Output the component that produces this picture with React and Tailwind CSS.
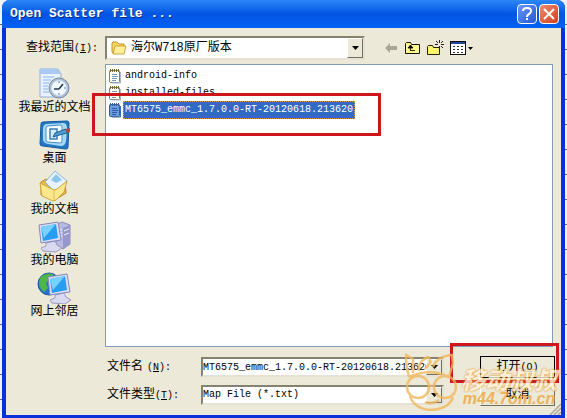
import React, { useState } from "react";

const files = [
  "android-info",
  "installed-files",
  "MT6575_emmc_1.7.0.0-RT-20120618.213620",
];

const RecentIcon = () => (
  <svg width="32" height="32" viewBox="0 0 32 32">
    <path d="M2 1h18l3 5v23H2z" fill="#e8f1fd" stroke="#8fb0dc" />
    <path d="M2 1h18l3 5H2z" fill="#a9c9f3" />
    <path d="M5 9h11M5 12h8M5 15h6M5 18h5M5 21h5M5 24h6" stroke="#8fb4e6" />
    <circle cx="21" cy="20" r="10" fill="#aebdcf" stroke="#788ca5" />
    <circle cx="21" cy="20" r="7.5" fill="#f2f8ff" stroke="#d5e2ee" />
    <path d="M21 21l4-5M21 21h-5" stroke="#23384e" strokeWidth="1.6" fill="none" />
    <circle cx="21" cy="14" r=".8" fill="#3b75b5" />
    <circle cx="27" cy="20" r=".8" fill="#3b75b5" />
    <circle cx="21" cy="26" r=".8" fill="#3b75b5" />
  </svg>
);

const DesktopIcon = () => (
  <svg width="32" height="32" viewBox="0 0 32 32">
    <path d="M4 3l24-1q2 0 2 2l-1 24q0 2-2 2L4 27q-3 0-3-2L2 5q0-2 2-2z" fill="#2479c4" stroke="#12579b" />
    <path d="M7 5l18-1q3 1 3 5l-1 13q-1 5-5 5l-13-2q-5-1-5-5V10q0-4 3-5z" fill="#a9d8f6" />
    <path d="M9 7l12-1q2 0 2 2v14q0 2-2 2L9 23q-2 0-2-2V9q0-2 2-2z" fill="#f7fcff" stroke="#438ec9" />
    <path d="M11 10h7v10h-7z" fill="#d6ecfc" stroke="#3e7eb8" strokeWidth="1.500" />
    <path d="M14 18l2-4 11-4 1 4-11 3z" fill="#4c9bd5" stroke="#1f6096" />
    <path d="M27 10l4-1v4l-3 1z" fill="#cf3e3e" />
  </svg>
);

const DocumentsIcon = () => (
  <svg width="32" height="32" viewBox="0 0 32 32">
    <path d="M3 12l5-3 5 3 14-1 1 12-11 7L3 25z" fill="#e8bd45" stroke="#ba8b28" />
    <path d="M7 12L17 1l12 10-9 14z" fill="#e7f3fd" stroke="#8bb2d6" />
    <path d="M13 10l5-6 6 6-6 3z" fill="#8fc4ec" />
    <path d="M2 13l14 7 3-1 10-8-3 11-8 8-3 1L4 26z" fill="#fbe88d" stroke="#d2a63c" />
    <path d="M16 20v10" stroke="#e2bd54" />
  </svg>
);

const Monitor = () => (
  <g>
    <path d="M9 22l9-2 2 4 5 3-6 4-13-1-2-3 5-2z" fill="#d9daf0" stroke="#9a9bc5" />
    <path d="M2 4l19-3 3 18-20 3z" fill="#dcddf5" stroke="#8589bd" />
    <path d="M4 6l15-3 2 14-15 3z" fill="#279df0" />
    <path d="M4 6l15-3-12 14z" fill="#79d1ff" />
  </g>
);

const ComputerIcon = () => (
  <svg width="34" height="32" viewBox="0 0 34 32">
    <path d="M19 4l6-3 8 3v19l-7 5-7-3z" fill="#b9b9df" stroke="#8a8cbb" />
    <path d="M26 7l7-3v19l-7 5z" fill="#9698cb" />
    <path d="M20 8l5 1M20 11l5 1M20 14l5 1M27 10l5-2M27 14l5-2" stroke="#f0f0ff" />
    <Monitor />
  </svg>
);

const NetworkIcon = () => (
  <svg width="34" height="32" viewBox="0 0 34 32">
    <circle cx="12" cy="12" r="11" fill="#2673c9" stroke="#1c58a0" />
    <path d="M3 6q5-6 13-4l-3 6-4 3 2 5-4 4Q0 15 3 6z" fill="#4fb64b" />
    <path d="M15 3l5 4-3 3-3-3z" fill="#8bd96c" />
    <g transform="translate(9 1)">
      <Monitor />
    </g>
  </svg>
);

const places = [
  { name: "我最近的文档", Icon: RecentIcon },
  { name: "桌面", Icon: DesktopIcon },
  { name: "我的文档", Icon: DocumentsIcon },
  { name: "我的电脑", Icon: ComputerIcon },
  { name: "网上邻居", Icon: NetworkIcon },
];

const NoteIcon = ({ selected }) => (
  <svg width="14" height="16" viewBox="0 0 14 16" className="shrink-0">
    <rect x="1.5" y="2.5" width="10" height="12" rx="1" fill={selected ? "#6d9be0" : "#fffef4"} stroke={selected ? "#315c9f" : "#777c86"} />
    <path d="M12.5 4v11H4" fill="none" stroke={selected ? "#416eaf" : "#a9b5c4"} />
    <path d="M2.5 1v3M4.5 1v3M6.5 1v3M8.5 1v3M10.5 1v3" stroke={selected ? "#37619e" : "#76613b"} />
    <path d="M4 6.5h5M4 8.5h6M4 10.5h5M4 12.5h4" stroke={selected ? "#2e5ca7" : "#7898b9"} />
  </svg>
);

const FolderIcon = () => (
  <svg width="16" height="14" viewBox="0 0 16 14" className="shrink-0">
    <path d="M1 2l1-1h4l2 2h5v9H2l-1-1z" fill="#f6d766" stroke="#c29327" />
    <path d="M4 5h11l-2 8H2z" fill="#fff09c" stroke="#cfa23a" />
  </svg>
);

const Arrow = () => (
  <span className="pointer-events-none absolute inset-y-0 right-0 flex w-4 items-center justify-center border border-t-white border-r-[#716f64] border-b-[#716f64] border-l-white bg-[#ece9d8]">
    <svg width="7" height="4" viewBox="0 0 7 4">
      <path d="M0 0h7L3.500 4z" fill="#000" />
    </svg>
  </span>
);

const field =
  "border-2 border-t-[#85836f] border-l-[#85836f] border-r-[#e5e2d3] border-b-[#e5e2d3] bg-white";

const Watermark = () => (
  <div className="pointer-events-none absolute right-1 bottom-1 flex items-end gap-0.5 opacity-80">
    <svg width="54" height="58" viewBox="0 0 54 58" fill="none" stroke="#f0b860" strokeWidth="2.500">
      <path d="M4 24Q1 14 1 2l7 4v14M14 18q-1-10 9-14 3 2 2 6l-5 6M28 14Q32 3 47 2l1 8-4 14M4 24q22-10 42 1" />
      <circle cx="13" cy="34" r="11" />
      <circle cx="40" cy="34" r="11" />
      <path d="M24 33h5M5 43q4 13 21 14 18-1 22-13M20 49q7 3 14-2" />
    </svg>
    <div className="flex flex-col items-center pb-1 font-['Noto_Sans_CJK_SC',sans-serif] font-bold italic">
      <span className="text-2xl leading-6 text-[#fff4dc] [text-shadow:0_0_2px_#e79225,0_0_2px_#e79225]">移动叔叔</span>
      <span className="font-['Liberation_Sans',sans-serif] text-base leading-4 text-[#eda63c]">m44.7om.cn</span>
    </div>
  </div>
);

export default function App() {
  const [selected, setSelected] = useState(files[2]);
  const [fileName, setFileName] = useState(files[2]);

  const pick = (name) => {
    setSelected(name);
    setFileName(name);
  };

  return (
    <div className="flex min-h-screen bg-[repeating-linear-gradient(#eef3fb_0_24px,#5f6675_24px_25px)] px-0.5 font-['Liberation_Mono','Noto_Sans_CJK_SC',monospace] text-xs text-black">
      <div className="relative flex flex-1 flex-col rounded-t-lg border-x-4 border-b-[3px] border-[#0831d9] bg-[#ece9d8]">
        <header className="-mx-1 flex h-7 items-center gap-0.5 rounded-t-lg bg-linear-to-b from-[#2c86f5] via-[#0454e3] to-[#0361f5] pr-1.5 pl-2">
          <h1 className="flex-1 text-[13px] font-bold text-white [text-shadow:1px_1px_#0a2a80]">Open Scatter file ...</h1>
          <button aria-label="Help" className="flex h-5 w-5 items-center justify-center rounded-sm border border-white bg-linear-to-br from-[#6c95f5] to-[#2157d7]">
            <svg width="12" height="14" viewBox="0 0 12 14" fill="none" stroke="#fff" strokeWidth="2">
              <path d="M2 4q0-3 4-3t4 3q0 2-2 3T6 10M6 11v2" />
            </svg>
          </button>
          <button aria-label="Close" className="flex h-5 w-5 items-center justify-center rounded-sm border border-white bg-linear-to-br from-[#ed8a6c] to-[#cf3c18]">
            <svg width="12" height="12" viewBox="0 0 12 12" stroke="#fff" strokeWidth="2">
              <path d="M1 1l10 10M11 1L1 11" />
            </svg>
          </button>
        </header>

        <div className="flex items-center pt-2">
          <label htmlFor="folder" className="w-[99px] pl-5 leading-5">
            查找范围<span className="text-[10px]">(<u>I</u>):</span>
          </label>
          <div className={`relative flex h-6 w-[260px] items-center ${field}`}>
            <span className="pointer-events-none absolute left-1">
              <FolderIcon />
            </span>
            <select id="folder" className="h-full w-full appearance-none pl-6 outline-none">
              <option>海尔W718原厂版本</option>
            </select>
            <Arrow />
          </div>
          <div className="ml-5 flex items-center gap-1.5">
            <button aria-label="Back">
              <svg width="14" height="12" viewBox="0 0 14 12">
                <path d="M0 6l5-5v3h7v4H5v3z" fill="#aaa797" />
              </svg>
            </button>
            <button aria-label="Up one level">
              <svg width="16" height="14" viewBox="0 0 16 14">
                <path d="M.5 12.500V2.500l1-1h4l1 2h8v9z" fill="#fff98b" stroke="#151500" />
                <path d="M5.500 10V6.500M5 9.500h5M3 7l2.500-3L8 7z" fill="#000" stroke="#000" strokeWidth=".8" />
              </svg>
            </button>
            <button aria-label="New folder">
              <svg width="17" height="16" viewBox="0 0 17 16">
                <path d="M.5 14.500v-8l1-1h4l1 2h6v7z" fill="#fff46e" stroke="#252100" />
                <path d="M12.500 0v3M12.500 6v3M8 4.500h3M14 4.500h3M9 1l2 2M14 6l2 2M16 1l-2 2" stroke="#222" />
              </svg>
            </button>
            <button aria-label="Views" className="flex items-center gap-0.5">
              <svg width="16" height="14" viewBox="0 0 16 14">
                <rect x=".5" y=".5" width="15" height="13" fill="#fff" stroke="#111" />
                <path d="M1 2h14" stroke="#23479c" strokeWidth="2" />
                <path d="M3 5.500h10M3 8.500h10M3 11.500h10" stroke="#333" strokeDasharray="2 2" />
              </svg>
              <svg width="5" height="3" viewBox="0 0 5 3">
                <path d="M0 0h5L2.500 3z" />
              </svg>
            </button>
          </div>
        </div>

        <main className="mt-1 flex flex-1">
          <nav className="flex w-[99px] flex-col items-center pt-px pr-0.5">
            {places.map(({ name, Icon }) => (
              <button key={name} className="flex h-[51px] flex-col items-center justify-end whitespace-nowrap leading-4">
                <Icon />
                {name}
              </button>
            ))}
          </nav>

          <div className="flex flex-1 flex-col">
            <ul className="relative mr-2 flex-1 border border-[#7f9db9] bg-white pt-0.5 pl-0.5">
              {files.map((name) => (
                <li key={name}>
                  <button onClick={() => pick(name)} className="flex h-[17px] items-center gap-px text-[10px]">
                    <NoteIcon selected={selected === name} />
                    <span
                      className={
                        selected === name
                          ? "border border-dotted border-[#d99a3d] bg-[#316ac5] px-px leading-4 text-white"
                          : "border border-transparent px-px leading-4"
                      }
                    >
                      {name}
                    </span>
                  </button>
                </li>
              ))}
              <li aria-hidden="true" className="pointer-events-none absolute top-7 -left-3.5 h-[43px] w-[289px] border-3 border-[#cc171d]" />
            </ul>

            <div className="relative flex pt-2 pr-1.5 pb-2">
              <div className="flex flex-1 flex-col gap-1">
                <div className="flex h-6 items-center">
                  <label htmlFor="name" className="w-24 pl-0.5">
                    文件名<span className="pl-1 text-[10px]">(<u>N</u>):</span>
                  </label>
                  <div className={`relative h-5 flex-1 ${field}`}>
                    <input
                      id="name"
                      value={fileName}
                      onChange={(e) => setFileName(e.target.value)}
                      className="block h-full w-full pr-4 text-[10px] outline-none"
                    />
                    <Arrow />
                  </div>
                </div>
                <div className="flex h-6 items-center">
                  <label htmlFor="type" className="w-24 pl-0.5">
                    文件类型<span className="text-[10px]">(<u>T</u>):</span>
                  </label>
                  <div className={`relative h-5 flex-1 ${field}`}>
                    <select id="type" className="block h-full w-full appearance-none pr-4 text-[10px] outline-none">
                      <option>Map File (*.txt)</option>
                    </select>
                    <Arrow />
                  </div>
                </div>
              </div>
              <div className="ml-9 flex w-[75px] flex-col justify-center gap-1.5">
                <button className="h-[22px] border border-black bg-[#ece9d8] leading-5">
                  打开<span className="text-[10px]">(<u>O</u>)</span>
                </button>
                <button className="h-[22px] border border-t-white border-r-[#716f64] border-b-[#716f64] border-l-white leading-5">取消</button>
              </div>
              <div className="pointer-events-none absolute -top-1 right-0.5 h-10 w-[109px] border-3 border-[#cc171d]" />
            </div>
          </div>
        </main>
        <svg width="12" height="12" viewBox="0 0 12 12" className="pointer-events-none absolute right-0 bottom-0">
          <path d="M1 12L12 1M5 12l7-7M9 12l3-3" stroke="#aca899" strokeWidth="1.500" />
        </svg>
        <Watermark />
      </div>
    </div>
  );
}
